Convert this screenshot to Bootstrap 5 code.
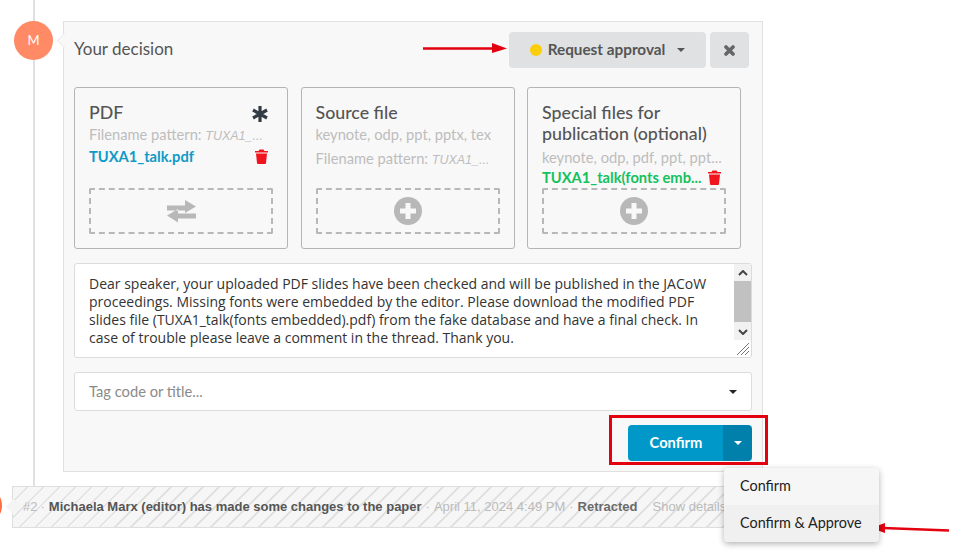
<!DOCTYPE html>
<html lang="en">
<head>
<meta charset="UTF-8">
<meta name="viewport" content="width=device-width, initial-scale=1.0">
<title>Your decision</title>
<link href="https://cdn.jsdelivr.net/npm/bootstrap@5.3.3/dist/css/bootstrap.min.css" rel="stylesheet">
<script src="https://cdn.jsdelivr.net/npm/bootstrap@5.3.3/dist/js/bootstrap.bundle.min.js"></script>
<style>
  html, body { height: 553px; overflow: hidden; }
  body { font-family: "Lato", "Noto Sans", sans-serif; color: #444; background: #fff; position: relative; }

  /* timeline */
  .tl-line { position: absolute; left: 33px; top: 0; width: 2px; height: 486px; background: #e0e0e0; }
  .tl-avatar { position: absolute; left: 14px; top: 21px; width: 39px; height: 39px; border-radius: 50%; background: #ff8a65; color: #fff; font-size: 13px; }
  .tl-avatar2 { position: absolute; left: -49px; top: 0; width: 39px; height: 39px; border-radius: 50%; background: #ff7043; }

  .page-wrap { padding: 21px 0 0 12px; position: relative; }
  .decision-box { width: 700px; height: 451px; margin-left: 51px; background: #f8f8f8; border: 1px solid #e0e0e0; padding: 10px; position: relative; }
  .decision-box::before { content: ""; position: absolute; left: -5px; top: 13px; width: 11px; height: 11px; background: #f8f8f8; border-left: 1px solid #eee; border-bottom: 1px solid #eee; transform: rotate(45deg); }
  .decision-title { font-size: 17px; font-weight: 400; margin: 0 0 2px; color: #555; }
  .head-row { height: 36px; margin-bottom: 19px; padding-right: 3px; }
  .btn.btn-request { background: #e0e1e2; color: #555; font-size: 15.3px; font-weight: 700; width: 197px; height: 36px; border: 0; border-radius: 4px; padding: 0 0 2px; }
  .btn.btn-close-x { background: #e0e1e2; width: 39px; height: 36px; border: 0; border-radius: 4px; padding: 0; }
  .dot-yellow { width: 12px; height: 12px; background: #fbce0a; border-radius: 50%; display: inline-block; margin: 2px 6px 0 0; }
  .caret-s { width: 0; height: 0; border-left: 4px solid transparent; border-right: 4px solid transparent; border-top: 4px solid currentColor; display: inline-block; }
  .caret-req { margin: 2px 0 0 12px; }

  .file-row { display: flex; gap: 12.5px; }
  .file-box { width: 214px; height: 162px; border: 1px solid #b5b5b5; border-radius: 3px; padding: 14px; display: flex; flex-direction: column; }
  .file-title { font-size: 17.8px; line-height: 21px; color: #555; margin: 0; }
  .file-title.two-line { margin-bottom: 2px; }
  .file-hint { font-size: 14.7px; line-height: 20px; color: #bdbdbd; white-space: nowrap; overflow: hidden; text-overflow: ellipsis; margin-top: 1px; }
  .file-hint.hint-gap { margin-top: 4px; }
  .file-hint i { font-size: 12.5px; font-family: "Liberation Sans", sans-serif; }
  .file-link { font-size: 14.7px; font-weight: 700; line-height: 20px; white-space: nowrap; }
  .file-trash { margin-right: 5px; flex-shrink: 0; }
  .file-star { margin: 4px 5px 0 0; }
  .drop-zone { height: 46px; border: 2px dashed #b8b8b8; border-radius: 2px; margin-top: auto; }
  .text-blue-f { color: #0e9ac9; }
  .text-green-f { color: #15c15d; }

  .note-wrap { width: 678px; height: 95px; margin-top: 14px; border: 1px solid #dcdcdc; border-radius: 3px; background: #fff; position: relative; font-size: 14px; line-height: 18px; color: #333; padding: 11px 32px 0 14px; font-family: "Open Sans", sans-serif; }
  .note-wrap p { margin: 0; }
  .scroll-bar { position: absolute; right: 0; top: 0; width: 17px; height: 76px; background: #f1f1f1; }
  .scroll-thumb { position: absolute; left: 0; top: 17px; width: 100%; height: 41px; background: #c1c1c1; }
  .scroll-up, .scroll-down { position: absolute; left: 0; width: 100%; height: 17px; display: flex; align-items: center; justify-content: center; }
  .scroll-up { top: 0; }
  .scroll-down { bottom: 0; }
  .grip { position: absolute; right: 1px; bottom: 1px; }

  .tag-select { width: 678px; height: 39px; margin-top: 14px; background: #fff; border: 1px solid #dcdcdc; border-radius: 3px; padding: 0 14px; font-size: 14.7px; color: #8a8a8a; }
  .confirm-row { margin-top: 14px; width: 678px; }
  .btn-split .btn { height: 36px; border: 0; border-radius: 4px; padding: 0; color: #fff; font-weight: 700; font-size: 14.7px; }
  .btn-split .btn.main-part { width: 96px; background: #0098c9; padding-bottom: 2px; }
  .btn-split .btn.side-part { width: 29px; background: #0080ab; }

  /* annotations drawn over the screenshot */
  .red-frame { position: absolute; left: 609px; top: 415px; width: 159px; height: 50px; border: 3px solid #e3000f; }
  .arrow-a { position: absolute; }
  .arrow-top { left: 422px; top: 40px; }
  .arrow-menu { left: 869px; top: 520px; }

  /* retracted bar */
  .event-wrap { position: relative; width: 760px; margin-top: 14px; }
  .event-bar { height: 42px; border: 1px solid #dedede; font-family: "Liberation Sans", sans-serif; font-size: 13px; padding-left: 10px; white-space: nowrap; overflow: hidden; color: #bbb;
    background: repeating-linear-gradient(135deg, #f6f6f6 0, #f6f6f6 9.3px, #e2e2e2 9.3px, #e2e2e2 11.3px); }
  .event-bar b { color: #555; }
  .event-bar b.state-f { color: #6a6a6a; }
  .bar-notch { position: absolute; left: -4px; top: 15px; width: 11px; height: 11px; background: #f4f4f4; transform: rotate(45deg); }
  .event-sep { margin-left: -1px; }
  .event-details { margin-left: 11px; }

  .dropdown-menu.menu-box { display: block; position: absolute; left: 724px; top: 468px; width: 155px; min-width: 0; height: 74px; padding: 0; background: #f6f6f6; border: 0; border-radius: 4px; box-shadow: 0 2px 6px rgba(0,0,0,.3); font-size: 14.4px; overflow: hidden; }
  .menu-box .dropdown-item { height: 37px; padding: 0 0 1px 16px; display: flex; align-items: center; color: #222; }
  .menu-box .dropdown-item.is-hover { background: #f0f0f0; }
</style>
</head>
<body>

<div class="tl-line"></div>
<div class="tl-avatar d-flex align-items-center justify-content-center">M</div>

<div class="page-wrap">
  <div class="decision-box">
    <div class="head-row d-flex align-items-center">
      <h5 class="decision-title flex-grow-1">Your decision</h5>
      <button type="button" class="btn btn-request d-flex align-items-center justify-content-center me-1">
        <span class="dot-yellow"></span><span>Request approval</span><span class="caret-s caret-req"></span>
      </button>
      <button type="button" class="btn btn-close-x d-flex align-items-center justify-content-center">
        <svg width="11" height="11" viewBox="0 0 11 11"><path d="M2 2L9 9M9 2L2 9" stroke="#666" stroke-width="3.6" stroke-linecap="round"/></svg>
      </button>
    </div>

    <div class="file-row">
      <div class="file-box">
        <div class="d-flex justify-content-between align-items-start">
          <h6 class="file-title">PDF</h6>
          <svg class="file-star" width="16" height="16" viewBox="0 0 16 16"><path d="M8 0V16M1 4L15 12M15 4L1 12" stroke="#333c44" stroke-width="3.2"/></svg>
        </div>
        <div class="file-hint">Filename pattern: <i>TUXA1_...</i></div>
        <div class="d-flex justify-content-between align-items-center">
          <span class="file-link text-blue-f">TUXA1_talk.pdf</span>
          <svg class="file-trash" width="13" height="15" viewBox="0 0 13 15"><path d="M4.5 0.5H8.5L9.5 2H13V3.5H0V2H3.5ZM1 4.5H12L11 14a1 1 0 0 1-1 1H3a1 1 0 0 1-1-1Z" fill="#f0141e"/></svg>
        </div>
        <div class="drop-zone d-flex align-items-center justify-content-center">
          <svg width="29" height="23" viewBox="0 0 29 23"><path d="M0 5.5H18V0L29 6.5L18 13V10.5H0ZM29 13.5H11V9L0 15.5L11 22.5V18.5H29Z" fill="#b8b8b8"/></svg>
        </div>
      </div>

      <div class="file-box">
        <h6 class="file-title">Source file</h6>
        <div class="file-hint">keynote, odp, ppt, pptx, tex</div>
        <div class="file-hint hint-gap">Filename pattern: <i>TUXA1_...</i></div>
        <div class="drop-zone d-flex align-items-center justify-content-center">
          <svg width="28" height="28" viewBox="0 0 28 28"><circle cx="14" cy="14" r="14" fill="#b8b8b8"/><path d="M14 6V22M6 14H22" stroke="#f8f8f8" stroke-width="5"/></svg>
        </div>
      </div>

      <div class="file-box">
        <h6 class="file-title two-line">Special files for publication (optional)</h6>
        <div class="file-hint">keynote, odp, pdf, ppt, ppt...</div>
        <div class="d-flex justify-content-between align-items-center">
          <span class="file-link text-green-f">TUXA1_talk(fonts emb...</span>
          <svg class="file-trash" width="13" height="15" viewBox="0 0 13 15"><path d="M4.5 0.5H8.5L9.5 2H13V3.5H0V2H3.5ZM1 4.5H12L11 14a1 1 0 0 1-1 1H3a1 1 0 0 1-1-1Z" fill="#f0141e"/></svg>
        </div>
        <div class="drop-zone d-flex align-items-center justify-content-center">
          <svg width="28" height="28" viewBox="0 0 28 28"><circle cx="14" cy="14" r="14" fill="#b8b8b8"/><path d="M14 6V22M6 14H22" stroke="#f8f8f8" stroke-width="5"/></svg>
        </div>
      </div>
    </div>

    <div class="note-wrap">
      <p>Dear speaker, your uploaded PDF slides have been checked and will be published in the JACoW proceedings. Missing fonts were embedded by the editor. Please download the modified PDF slides file (TUXA1_talk(fonts embedded).pdf) from the fake database and have a final check. In case of trouble please leave a comment in the thread. Thank you.</p>
      <div class="scroll-bar">
        <div class="scroll-up"><svg width="10" height="6" viewBox="0 0 10 6"><path d="M1 5L5 1L9 5" fill="none" stroke="#444" stroke-width="2"/></svg></div>
        <div class="scroll-thumb"></div>
        <div class="scroll-down"><svg width="10" height="6" viewBox="0 0 10 6"><path d="M1 1L5 5L9 1" fill="none" stroke="#444" stroke-width="2"/></svg></div>
      </div>
      <svg class="grip" width="14" height="14" viewBox="0 0 14 14"><path d="M13 1L1 13M13 5L5 13M13 9L9 13" stroke="#777" stroke-width="1"/></svg>
    </div>

    <div class="tag-select d-flex align-items-center justify-content-between">
      <span>Tag code or title...</span><span class="caret-s text-dark"></span>
    </div>

    <div class="confirm-row d-flex justify-content-end">
      <div class="btn-group btn-split">
        <button type="button" class="btn main-part">Confirm</button>
        <button type="button" class="btn side-part d-flex align-items-center justify-content-center"><span class="caret-s"></span></button>
      </div>
    </div>
  </div>

  <div class="event-wrap">
    <div class="tl-avatar2"></div>
    <div class="bar-notch"></div>
    <div class="event-bar d-flex align-items-center gap-1">
      <span>#2</span><span class="event-sep">·</span><b>Michaela Marx (editor) has made some changes to the paper</b><span>·</span><span>April 11, 2024 4:49 PM</span><span>·</span><b class="state-f">Retracted</b><span class="event-details">Show details</span>
    </div>
  </div>
</div>

<div class="dropdown-menu menu-box">
  <a class="dropdown-item" href="#">Confirm</a>
  <a class="dropdown-item is-hover" href="#">Confirm &amp; Approve</a>
</div>

<div class="red-frame"></div>
<svg class="arrow-a arrow-top" width="88" height="16" viewBox="0 0 88 16"><path d="M1 8.5H72" stroke="#e3000f" stroke-width="2.5"/><path d="M70 3L85 8.5L70 13Z" fill="#e3000f"/></svg>
<svg class="arrow-a arrow-menu" width="84" height="16" viewBox="0 0 84 16"><path d="M14 8L80 10.5" stroke="#e3000f" stroke-width="2.5"/><path d="M16 3L2 8L16 13Z" fill="#e3000f"/></svg>

</body>
</html>
